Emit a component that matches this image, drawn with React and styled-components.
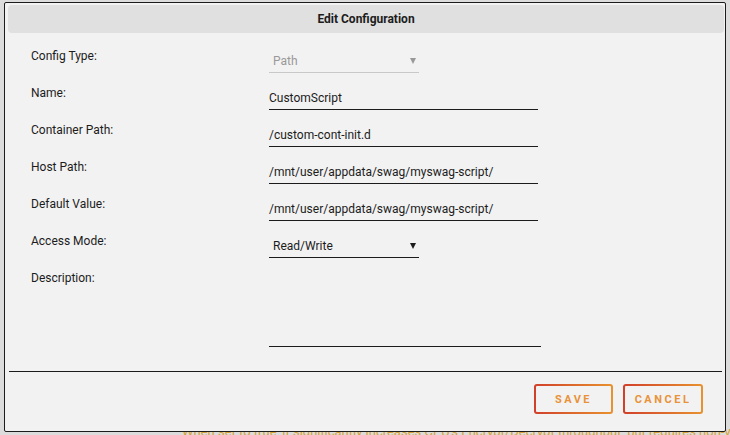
import React from "react";
import styled, { createGlobalStyle } from "styled-components";

const GlobalStyle = createGlobalStyle`
  html, body {
    margin: 0;
    padding: 0;
    background: #dcdcdc;
    font-family: "Roboto", "Liberation Sans", sans-serif;
    overflow: hidden;
  }
`;

const Page = styled.div`
  position: relative;
  width: 730px;
  height: 435px;
  overflow: hidden;
`;

const BackText = styled.p`
  margin: 0;
  padding: 424px 0 0 182px;
  font-size: 13px;
  color: #d9a235;
  white-space: nowrap;
`;

const Dialog = styled.div`
  position: absolute;
  left: 4px;
  top: 2px;
  width: 722px;
  height: 430px;
  box-sizing: border-box;
  padding: 2px 1px 0 3px;
  background: #f2f2f2;
  border: 1px solid #1c1c1c;
  border-radius: 2px;
  display: flex;
  flex-direction: column;
`;

const Header = styled.div`
  height: 28px;
  flex-shrink: 0;
  background: #e0e0e0;
  border-radius: 4px;
  display: flex;
  align-items: center;
  justify-content: center;
  font-size: 12px;
  font-weight: 700;
  color: #1c1c1c;
`;

const Body = styled.div`
  padding: 4px 0 0 23px;
  flex: 1;
`;

const Row = styled.div`
  display: flex;
  align-items: flex-start;
  height: ${(p) => p.$height || 37}px;
`;

const Label = styled.div`
  width: 238px;
  padding-top: 12px;
  font-size: 12px;
  color: #1c1c1c;
`;

const Input = styled.div`
  margin-top: 10px;
  width: ${(p) => p.$width || 269}px;
  height: ${(p) => p.$h || 26}px;
  border-bottom: 1px solid ${(p) => (p.$muted ? "#c8c8c8" : "#1c1c1c")};
  display: flex;
  align-items: center;
  justify-content: space-between;
  padding: 0 ${(p) => (p.$select ? "0 0 4px" : "0")};
  box-sizing: border-box;
  font-size: 12px;
  color: ${(p) => (p.$muted ? "#999" : "#1c1c1c")};
`;

const Value = styled.span`
  padding-top: 2px;
`;

const Caret = styled.span`
  width: 0;
  height: 0;
  margin-right: 3px;
  margin-top: 3px;
  border-left: 3.5px solid transparent;
  border-right: 3.5px solid transparent;
  border-top: 6px solid ${(p) => (p.$muted ? "#999" : "#1c1c1c")};
`;

const Divider = styled.hr`
  margin: 0 2px 0 1px;
  border: none;
  border-top: 1px solid #1c1c1c;
  height: 0;
  flex-shrink: 0;
`;

const Footer = styled.div`
  display: flex;
  justify-content: flex-end;
  gap: 10px;
  height: 59px;
  box-sizing: border-box;
  flex-shrink: 0;
  padding: 12px 21px 0 0;
`;

const Button = styled.button`
  width: ${(p) => p.$width}px;
  height: 30px;
  border: 2px solid transparent;
  border-radius: 3px;
  background: linear-gradient(#f2f2f2, #f2f2f2) padding-box,
    linear-gradient(90deg, #d1402a, #e8922f) border-box;
  color: #e8923a;
  font-family: "Roboto", "Liberation Sans", sans-serif;
  font-size: 11px;
  font-weight: 700;
  letter-spacing: 2.5px;
  text-transform: uppercase;
  padding: 0;
`;

const fields = [
  { label: "Name:", value: "CustomScript" },
  { label: "Container Path:", value: "/custom-cont-init.d" },
  { label: "Host Path:", value: "/mnt/user/appdata/swag/myswag-script/" },
  { label: "Default Value:", value: "/mnt/user/appdata/swag/myswag-script/" },
];

export default function App() {
  return (
    <Page>
      <GlobalStyle />
      <BackText>
        When set to true, it significantly increases CPU's Encrypt/Decrypt throughput, but requires non-validated privileges
      </BackText>
      <Dialog>
        <Header>Edit Configuration</Header>
        <Body>
          <Row>
            <Label>Config Type:</Label>
            <Input $width={150} $muted $select>
              <Value>Path</Value>
              <Caret $muted />
            </Input>
          </Row>
          {fields.map((f) => (
            <Row key={f.label}>
              <Label>{f.label}</Label>
              <Input>
                <Value>{f.value}</Value>
              </Input>
            </Row>
          ))}
          <Row>
            <Label>Access Mode:</Label>
            <Input $width={150} $select>
              <Value>Read/Write</Value>
              <Caret />
            </Input>
          </Row>
          <Row $height={112}>
            <Label>Description:</Label>
            <Input $width={272} $h={78} />
          </Row>
        </Body>
        <Divider />
        <Footer>
          <Button $width={79}>Save</Button>
          <Button $width={80}>Cancel</Button>
        </Footer>
      </Dialog>
    </Page>
  );
}
